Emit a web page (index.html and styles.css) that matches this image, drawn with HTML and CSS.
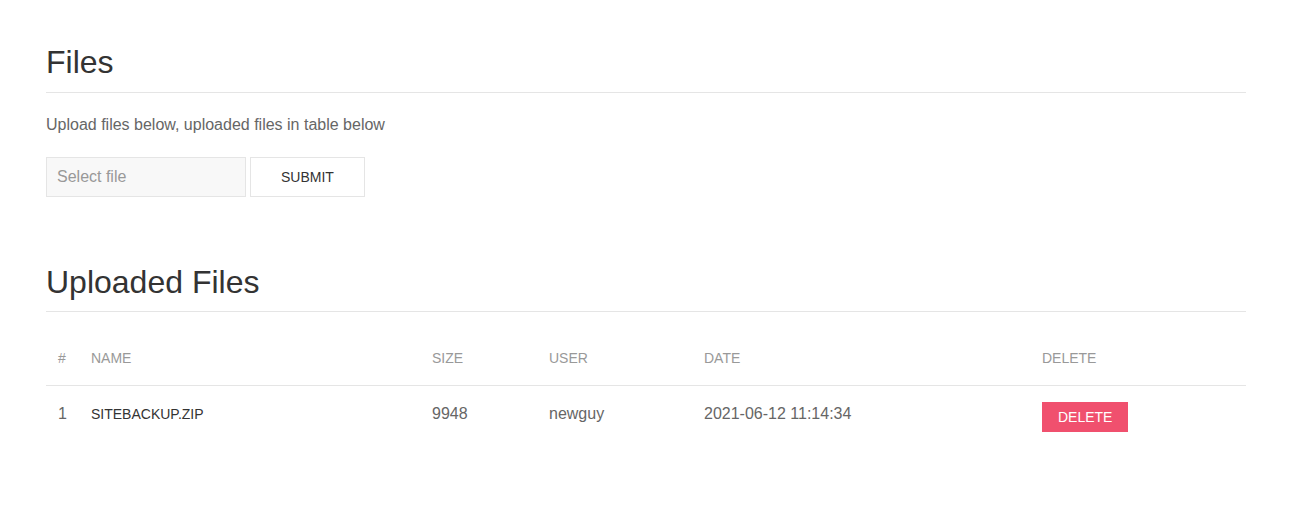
FILE: index.html
```html
<!DOCTYPE html>
<html>
<head>
<meta charset="utf-8">
<link rel="stylesheet" href="styles.css">
</head>
<body>
<div class="page">
  <h2 class="heading">Files</h2>
  <p class="lead">Upload files below, uploaded files in table below</p>
  <form class="upload">
    <input class="file-input" type="text" placeholder="Select file">
    <button class="btn-default" type="button">Submit</button>
  </form>

  <h2 class="heading heading-second">Uploaded Files</h2>
  <table class="table">
    <thead>
      <tr>
        <th class="c-num">#</th>
        <th class="c-name">Name</th>
        <th class="c-size">Size</th>
        <th class="c-user">User</th>
        <th class="c-date">Date</th>
        <th class="c-del">Delete</th>
      </tr>
    </thead>
    <tbody>
      <tr>
        <td>1</td>
        <td><span class="fname">sitebackup.zip</span></td>
        <td>9948</td>
        <td>newguy</td>
        <td>2021-06-12 11:14:34</td>
        <td><button class="btn-danger" type="button">Delete</button></td>
      </tr>
    </tbody>
  </table>
</div>
</body>
</html>
```
FILE: styles.css
```css
* { box-sizing: border-box; }
html, body { margin: 0; padding: 0; background: #fff; }
body {
  font-family: "Liberation Sans", Arial, sans-serif;
  font-size: 16px;
  line-height: 1.5;
  color: #666;
}
.page {
  width: 1200px;
  margin-left: 46px;
  padding-top: 42px;
}
.heading {
  margin: 0;
  font-size: 32px;
  font-weight: 400;
  line-height: 1.3;
  color: #333;
  padding-bottom: 8px;
  border-bottom: 1px solid #e5e5e5;
}
.heading-second { margin-top: 65px; }
.lead { margin: 20px 0; }
.upload {
  display: flex;
  gap: 4px;
  margin: 0;
}
.file-input {
  width: 200px;
  height: 40px;
  padding: 0 10px;
  background: #f8f8f8;
  border: 1px solid #e5e5e5;
  font-family: inherit;
  font-size: 16px;
  color: #666;
  outline: none;
  margin: 0;
}
.file-input::placeholder { color: #999; }
.btn-default {
  height: 40px;
  padding: 0 30px;
  background: transparent;
  border: 1px solid #e5e5e5;
  color: #333;
  font-family: inherit;
  font-size: 14px;
  line-height: 38px;
  text-transform: uppercase;
  margin: 0;
}
.table {
  width: 100%;
  border-collapse: collapse;
  margin-top: 20px;
  table-layout: fixed;
}
.table th {
  padding: 16px 12px;
  text-align: left;
  font-size: 14px;
  font-weight: 400;
  line-height: 21px;
  color: #999;
  text-transform: uppercase;
  vertical-align: bottom;
  border-bottom: 1px solid #e5e5e5;
}
.table td {
  padding: 16px 12px;
  vertical-align: top;
  line-height: 24px;
  color: #666;
}
.c-num { width: 33px; }
.c-name { width: 341px; }
.c-size { width: 117px; }
.c-user { width: 155px; }
.c-date { width: 338px; }
.fname {
  font-size: 14px;
  text-transform: uppercase;
  color: #333;
}
.btn-danger {
  display: block;
  height: 30px;
  padding: 0 16px;
  border: 0;
  background: #f0506e;
  color: #fff;
  font-family: inherit;
  font-size: 14px;
  line-height: 30px;
  text-transform: uppercase;
  margin: 0;
}
```
